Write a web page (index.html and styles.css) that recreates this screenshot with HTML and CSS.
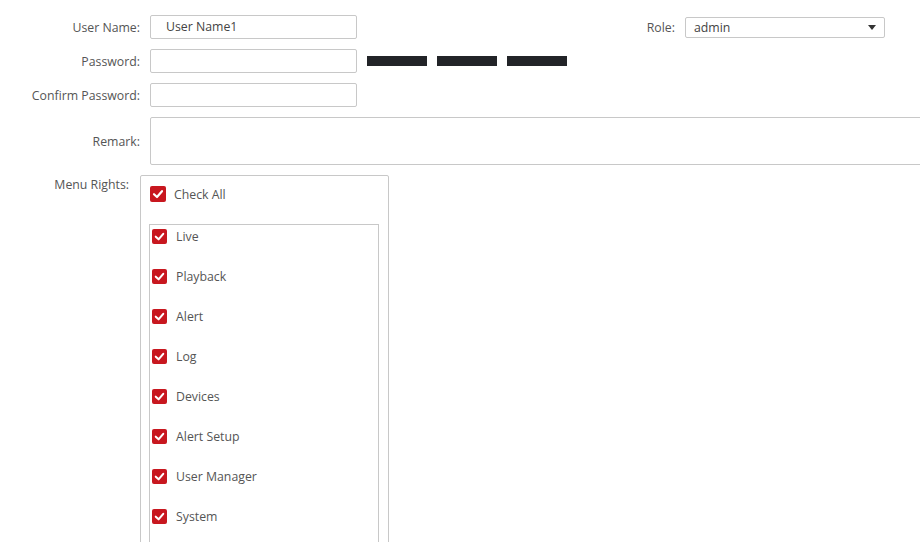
FILE: index.html
```html
<!DOCTYPE html>
<html>
<head>
<meta charset="utf-8">
<link rel="stylesheet" href="styles.css">
</head>
<body>
<div class="form">
  <div class="row">
    <label class="lbl">User Name:</label>
    <div class="input name">User Name1</div>
    <div class="role">
      <label class="role-lbl">Role:</label>
      <div class="select"><span>admin</span><span class="caret"></span></div>
    </div>
  </div>
  <div class="row">
    <label class="lbl">Password:</label>
    <div class="input"></div>
    <div class="strength"><span></span><span></span><span></span></div>
  </div>
  <div class="row">
    <label class="lbl">Confirm Password:</label>
    <div class="input"></div>
  </div>
  <div class="row">
    <label class="lbl">Remark:</label>
    <div class="textarea"></div>
  </div>
  <div class="row rights-row">
    <label class="lbl rights-lbl">Menu Rights:</label>
    <div class="rights">
      <div class="check all"><span class="cb"><svg viewBox="0 0 16 16"><path d="M4 8.2 L7 11 L12 5.2" fill="none" stroke="#fff" stroke-width="2.2" stroke-linecap="round" stroke-linejoin="round"/></svg></span>Check All</div>
      <div class="list">
        <div class="check"><span class="cb"><svg viewBox="0 0 16 16"><path d="M4 8.2 L7 11 L12 5.2" fill="none" stroke="#fff" stroke-width="2.2" stroke-linecap="round" stroke-linejoin="round"/></svg></span>Live</div>
        <div class="check"><span class="cb"><svg viewBox="0 0 16 16"><path d="M4 8.2 L7 11 L12 5.2" fill="none" stroke="#fff" stroke-width="2.2" stroke-linecap="round" stroke-linejoin="round"/></svg></span>Playback</div>
        <div class="check"><span class="cb"><svg viewBox="0 0 16 16"><path d="M4 8.2 L7 11 L12 5.2" fill="none" stroke="#fff" stroke-width="2.2" stroke-linecap="round" stroke-linejoin="round"/></svg></span>Alert</div>
        <div class="check"><span class="cb"><svg viewBox="0 0 16 16"><path d="M4 8.2 L7 11 L12 5.2" fill="none" stroke="#fff" stroke-width="2.2" stroke-linecap="round" stroke-linejoin="round"/></svg></span>Log</div>
        <div class="check"><span class="cb"><svg viewBox="0 0 16 16"><path d="M4 8.2 L7 11 L12 5.2" fill="none" stroke="#fff" stroke-width="2.2" stroke-linecap="round" stroke-linejoin="round"/></svg></span>Devices</div>
        <div class="check"><span class="cb"><svg viewBox="0 0 16 16"><path d="M4 8.2 L7 11 L12 5.2" fill="none" stroke="#fff" stroke-width="2.2" stroke-linecap="round" stroke-linejoin="round"/></svg></span>Alert Setup</div>
        <div class="check"><span class="cb"><svg viewBox="0 0 16 16"><path d="M4 8.2 L7 11 L12 5.2" fill="none" stroke="#fff" stroke-width="2.2" stroke-linecap="round" stroke-linejoin="round"/></svg></span>User Manager</div>
        <div class="check"><span class="cb"><svg viewBox="0 0 16 16"><path d="M4 8.2 L7 11 L12 5.2" fill="none" stroke="#fff" stroke-width="2.2" stroke-linecap="round" stroke-linejoin="round"/></svg></span>System</div>
      </div>
    </div>
  </div>
</div>
</body>
</html>
```

FILE: styles.css
```css
html, body {
  margin: 0;
  padding: 0;
  background: #fff;
  overflow: hidden;
  height: 542px;
}
body {
  font-family: "Open Sans", "Liberation Sans", sans-serif;
  font-size: 12.3px;
  color: #555;
}
.form {
  padding-top: 15px;
  display: flex;
  flex-direction: column;
  gap: 10px;
}
.row {
  display: flex;
  align-items: center;
}
.lbl {
  width: 150px;
  padding-right: 10px;
  box-sizing: border-box;
  text-align: right;
  flex-shrink: 0;
}
.input {
  width: 207px;
  height: 24px;
  box-sizing: border-box;
  border: 1px solid #c8c8c8;
  border-radius: 2px;
  padding-left: 15px;
  line-height: 22px;
  color: #444;
}
.role {
  margin-left: auto;
  margin-right: 35px;
  display: flex;
  align-items: center;
}
.role-lbl {
  margin-right: 10px;
}
.select {
  width: 200px;
  height: 21px;
  box-sizing: border-box;
  border: 1px solid #c8c8c8;
  border-radius: 2px;
  padding: 0 8px 0 8px;
  display: flex;
  align-items: center;
  justify-content: space-between;
  color: #444;
}
.caret {
  width: 0;
  height: 0;
  border-left: 4px solid transparent;
  border-right: 4px solid transparent;
  border-top: 5px solid #333;
}
.strength {
  display: flex;
  gap: 10px;
  margin-left: 10px;
}
.strength span {
  width: 60px;
  height: 10px;
  background: #222428;
}
.textarea {
  width: 800px;
  height: 48px;
  box-sizing: border-box;
  border: 1px solid #c8c8c8;
  border-radius: 2px;
  flex-shrink: 0;
}
.rights-row {
  align-items: flex-start;
}
.rights-lbl {
  width: 140px;
  padding-right: 11px;
  padding-top: 1px;
}
.rights {
  width: 249px;
  height: 420px;
  box-sizing: border-box;
  border: 1px solid #c8c8c8;
  border-radius: 2px;
  padding: 10px 0 0 9px;
}
.check {
  display: flex;
  align-items: center;
  height: 16px;
  color: #555;
}
.cb {
  width: 16px;
  height: 16px;
  background: #c8171f;
  border-radius: 2px;
  margin-right: 8px;
  flex-shrink: 0;
  display: block;
}
.cb svg {
  display: block;
  width: 16px;
  height: 16px;
}
.list {
  margin-top: 22px;
  margin-left: -1px;
  width: 230px;
  height: 400px;
  box-sizing: border-box;
  border: 1px solid #c8c8c8;
  padding: 3px 0 0 2px;
  display: flex;
  flex-direction: column;
  gap: 24px;
}
.list .cb {
  width: 15px;
  height: 15px;
  margin-right: 9px;
}
.list .cb svg {
  width: 15px;
  height: 15px;
}
```
